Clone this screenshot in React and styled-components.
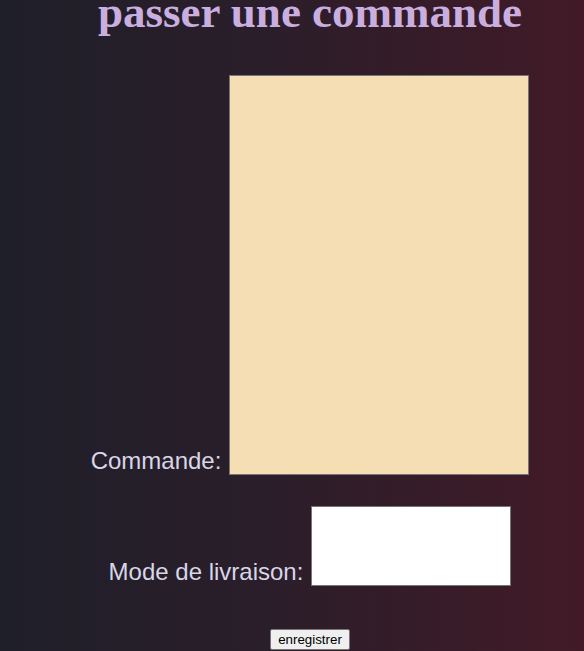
import React from 'react';
import styled, { createGlobalStyle } from 'styled-components';

const GlobalStyle = createGlobalStyle`
  html, body {
    margin: 0;
    padding: 0;
  }
  body {
    background: linear-gradient(to right, #1f1f29 0%, #2a1e2a 45%, #421a27 100%);
    min-height: 100vh;
    overflow: hidden;
  }
`;

const Page = styled.div`
  height: 651px;
  display: flex;
  flex-direction: column;
  align-items: center;
  padding-left: 36px;
  box-sizing: border-box;
`;

const Title = styled.h1`
  margin: -13px 0 38px;
  font-family: "Liberation Serif", "Times New Roman", serif;
  font-weight: bold;
  font-size: 45px;
  line-height: 50px;
  color: #c9aee0;
`;

const Form = styled.form`
  display: flex;
  flex-direction: column;
  align-items: center;
`;

const Row = styled.div`
  display: flex;
  align-items: flex-end;
  gap: 8px;
  margin-bottom: ${(p) => p.$space}px;
`;

const Label = styled.label`
  font-family: "Liberation Sans", Arial, sans-serif;
  font-size: 24px;
  line-height: 27px;
  color: #d8d6e8;
  margin-bottom: 1px;
`;

const Area = styled.textarea`
  display: block;
  box-sizing: border-box;
  width: ${(p) => p.$w}px;
  height: ${(p) => p.$h}px;
  margin: 0;
  padding: 2px;
  resize: none;
  border: 1px solid #767676;
  background: ${(p) => p.$bg};
  font-family: "Liberation Mono", monospace;
  font-size: 13px;
`;

const Submit = styled.button`
  box-sizing: border-box;
  width: 80px;
  height: 21px;
  padding: 1px 6px;
  font-family: "Liberation Sans", Arial, sans-serif;
  font-size: 13.33px;
  color: #000;
  background: #efefef;
  border: 1px solid #767676;
  border-radius: 2px;
`;

export default function App() {
  return (
    <>
      <GlobalStyle />
      <Page>
        <Title>passer une commande</Title>
        <Form onSubmit={(e) => e.preventDefault()}>
          <Row $space={31}>
            <Label htmlFor="commande">Commande:</Label>
            <Area id="commande" $w={300} $h={400} $bg="#f5deb3" />
          </Row>
          <Row $space={43}>
            <Label htmlFor="livraison">Mode de livraison:</Label>
            <Area id="livraison" $w={200} $h={80} $bg="#ffffff" />
          </Row>
          <Submit type="submit">enregistrer</Submit>
        </Form>
      </Page>
    </>
  );
}
